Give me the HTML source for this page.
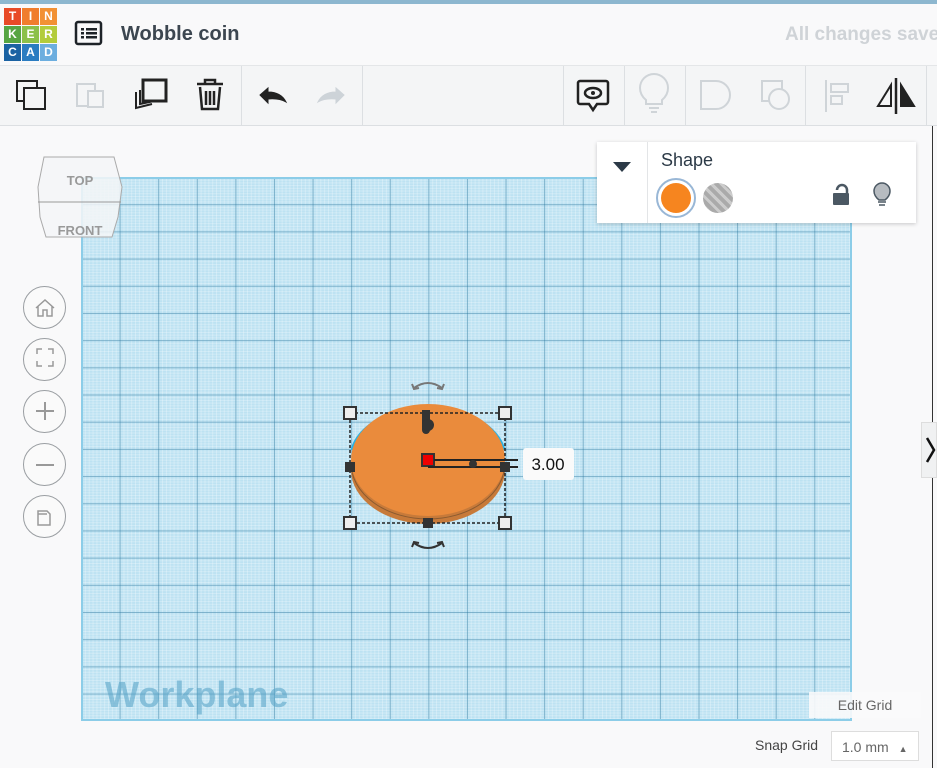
<!DOCTYPE html>
<html><head><meta charset="utf-8"><style>
*{margin:0;padding:0;box-sizing:border-box}
body{width:937px;height:768px;overflow:hidden;background:#f9f9fa;font-family:"Liberation Sans",sans-serif;position:relative}
.abs{position:absolute}
#topbar{left:0;top:0;width:937px;height:4px;background:#8db7cf}
#hdr{left:0;top:4px;width:937px;height:62px;background:#f9f9fa;border-bottom:1px solid #e4e6e8}
#tb{left:0;top:66px;width:937px;height:60px;background:#f4f5f6;border-bottom:1px solid #dcdfe2}
.logo div{position:absolute;width:17px;height:17px;color:#fff;font-weight:bold;font-size:12px;text-align:center;line-height:17px}
#plane{left:81px;top:177px;width:771px;height:544px;background-color:#bde2f2;
background-image:
linear-gradient(to right,rgba(40,120,160,.5) 1px,transparent 1px),
linear-gradient(to bottom,rgba(40,120,160,.5) 1px,transparent 1px),
linear-gradient(to right,rgba(255,255,255,.28) 1px,transparent 1px),
linear-gradient(to bottom,rgba(255,255,255,.28) 1px,transparent 1px);
background-size:38.6px 27.2px,38.6px 27.2px,3.86px 2.72px,3.86px 2.72px;
box-shadow:inset 0 0 0 2px #8ccde8}
.circ{position:absolute;left:23px;width:43px;height:43px;border:1px solid #9a9ea2;border-radius:50%;background:#fafafa}
.sep{position:absolute;top:66px;width:1px;height:60px;background:#dcdfe2}
</style></head><body>
<div class="abs" id="topbar"></div>
<div class="abs" id="hdr"></div>
<div class="abs logo" style="left:4px;top:8px;width:54px;height:54px">
<div style="left:0;top:0;background:#e84a27">T</div><div style="left:18px;top:0;background:#f07d2d">I</div><div style="left:36px;top:0;background:#f29134">N</div>
<div style="left:0;top:18px;background:#57a543">K</div><div style="left:18px;top:18px;background:#8cc04a">E</div><div style="left:36px;top:18px;background:#b3cc3c">R</div>
<div style="left:0;top:36px;background:#1b62a3">C</div><div style="left:18px;top:36px;background:#2a7cc1">A</div><div style="left:36px;top:36px;background:#6caedf">D</div>
</div>
<svg class="abs" style="left:74px;top:20px" width="30" height="26"><rect x="2" y="2" width="25" height="22" rx="2" fill="none" stroke="#1e2328" stroke-width="2.5"/><g fill="#1e2328"><rect x="7" y="8" width="3" height="2.5"/><rect x="12" y="8" width="11" height="2.5"/><rect x="7" y="12" width="3" height="2.5"/><rect x="12" y="12" width="11" height="2.5"/><rect x="7" y="16" width="3" height="2.5"/><rect x="12" y="16" width="11" height="2.5"/></g></svg>
<div class="abs" style="left:121px;top:23px;font-size:20px;font-weight:bold;color:#3c4650">Wobble coin</div>
<div class="abs" style="left:785px;top:24px;font-size:19px;font-weight:bold;color:#cfd3d7;white-space:nowrap">All changes saved</div>
<div class="abs" id="tb"></div>
<div class="sep" style="left:241px"></div><div class="sep" style="left:362px"></div><div class="sep" style="left:563px"></div><div class="sep" style="left:624px"></div><div class="sep" style="left:685px"></div><div class="sep" style="left:805px"></div><div class="sep" style="left:926px"></div>
<svg class="abs" style="left:0;top:66px" width="937" height="60" fill="none" stroke-width="2">
<rect x="17" y="15" width="20" height="20" stroke="#222" fill="#f4f5f6"/><rect x="24" y="22" width="21" height="21" stroke="#222" fill="#f4f5f6"/>
<rect x="77" y="18" width="18" height="22" stroke="#cfd4d8"/><rect x="88" y="25" width="15" height="16" stroke="#cfd4d8" fill="#f4f5f6"/>
<path d="M136 26 l0 16 l16 -4 M140 24 l0 14 l14 -3" stroke="#222"/><rect x="143" y="14" width="23" height="21" stroke="#222" stroke-width="3" fill="#f4f5f6"/>
<path d="M197 18 h26 M205 18 v-4 h10 v4 M200 21 l2 22 h16 l2 -22 M206 25 v14 M210 25 v14 M214 25 v14" stroke="#222" stroke-width="2.5"/>
<path d="M260 29 l8 -7 v4 q13 0 18 10 q-7 -4 -18 -3 v4 z" fill="#222" stroke="#222" stroke-width="1"/>
<path d="M344 29 l-8 -7 v4 q-13 0 -18 10 q7 -4 18 -3 v4 z" fill="#cdd3d8" stroke="#cdd3d8" stroke-width="1"/>
<path d="M580 15 h26 a2 2 0 0 1 2 2 v19 a2 2 0 0 1 -2 2 h-9 l-4 6 l-4 -6 h-9 a2 2 0 0 1 -2 -2 v-19 a2 2 0 0 1 2 -2z" stroke="#222" stroke-width="2.5"/><ellipse cx="593" cy="27" rx="8" ry="5" stroke="#222" stroke-width="2.5"/><circle cx="593" cy="27" r="2" fill="#222"/>
<path d="M646 34 q-6 -5 -6 -12 a14 14 0 0 1 28 0 q0 7 -6 12 v4 h-16z M649 42 h10 M651 46 h6" stroke="#cfd4d8"/>
<path d="M701 15 h15 a11 11 0 1 1 0 28 h-15z" stroke="#cfd4d8"/>
<rect x="762" y="15" width="20" height="20" stroke="#cfd4d8"/><circle cx="779" cy="33" r="10" stroke="#cfd4d8" fill="#f4f5f6"/>
<path d="M826 14 v32" stroke="#cfd4d8"/><rect x="831" y="18" width="17" height="8" stroke="#cfd4d8"/><rect x="831" y="30" width="11" height="8" stroke="#cfd4d8"/>
<path d="M896 12 v36" stroke="#222" stroke-width="2.5"/><path d="M891 19 l-13 21 h13z" stroke="#222"/><path d="M901 19 l13 21 h-13z" fill="#222" stroke="#222"/>
</svg>
<div class="abs" style="left:932px;top:126px;width:1px;height:642px;background:#333"></div>
<div class="abs" id="plane"></div>
<div class="abs" style="left:105px;top:674px;font-size:36px;font-weight:bold;color:rgba(90,165,200,.6)">Workplane</div>
<svg class="abs" style="left:36px;top:155px" width="90" height="100"><path d="M8 2 h70 l8 30 l-4 30 l-6 20 h-66 l-6 -20 l-2 -30z" fill="rgba(245,246,247,.85)" stroke="#aaa"/><path d="M2 47 h83" stroke="#999"/><text x="44" y="30" text-anchor="middle" font-family="Liberation Sans" font-weight="bold" font-size="13" fill="#999">TOP</text><text x="44" y="80" text-anchor="middle" font-family="Liberation Sans" font-weight="bold" font-size="13" fill="#999">FRONT</text></svg>
<div class="circ" style="top:286px"></div><div class="circ" style="top:338px"></div><div class="circ" style="top:390px"></div><div class="circ" style="top:443px"></div><div class="circ" style="top:495px"></div>
<svg class="abs" style="left:23px;top:286px" width="44" height="252" fill="none" stroke="#999" stroke-width="1.5">
<path d="M13 22 l9 -8 l9 8 M15 20 v10 h5 v-6 h4 v6 h5 v-10"/>
<path d="M14 68 v-5 h5 M25 63 h5 v5 M30 75 v5 h-5 M19 80 h-5 v-5"/>
<path d="M22 116 v18 M13 125 h18" stroke-width="2"/>
<path d="M13 179 h18" stroke-width="2"/>
<path d="M15 239 v-14 h9 l3 3 v11 z M15 228 h9"/>
</svg>
<div class="abs" style="left:597px;top:142px;width:319px;height:81px;background:#fff;box-shadow:0 1px 4px rgba(0,0,0,.2)"></div>
<div class="abs" style="left:647px;top:142px;width:1px;height:81px;background:#e3e5e7"></div>
<svg class="abs" style="left:612px;top:161px" width="20" height="12"><path d="M1 1 h18 l-9 10z" fill="#2c3a47"/></svg>
<div class="abs" style="left:661px;top:150px;font-size:18px;color:#2c3a47">Shape</div>
<div class="abs" style="left:656px;top:178px;width:40px;height:40px;border:2px solid #99b7d6;border-radius:50%;background:#fff"></div>
<div class="abs" style="left:661px;top:183px;width:30px;height:30px;border-radius:50%;background:#f6851f"></div>
<div class="abs" style="left:703px;top:183px;width:30px;height:30px;border-radius:50%;background:repeating-linear-gradient(45deg,#aaa 0 4px,#ccc 4px 7px)"></div>
<svg class="abs" style="left:830px;top:180px" width="70" height="30"><path d="M7 10 a5 5 0 0 1 10 0 v4" fill="none" stroke="#4b5863" stroke-width="2.5"/><rect x="3" y="13" width="16" height="12" rx="1" fill="#4b5863"/><path d="M49 20 q-5 -4 -5 -9 a8 8 0 0 1 16 0 q0 5 -5 9z" fill="#b7bcc1" stroke="#4b5863" stroke-width="1.5"/><path d="M48 22 h8 M49 25 h6" stroke="#4b5863" stroke-width="1.5"/></svg>
<svg class="abs" style="left:330px;top:370px" width="260" height="190">
<ellipse cx="98" cy="100" rx="77" ry="54" fill="#c77a3a"/>
<path d="M22 80 a77 50 0 0 1 152 0" fill="none" stroke="#2ab2e3" stroke-width="3"/>
<ellipse cx="98" cy="90" rx="77" ry="56" fill="#ea8b3c"/>
<path d="M21 93 a77 56 0 0 0 154 0" fill="none" stroke="#8a5a30" stroke-width="1"/>
<rect x="20" y="43" width="155" height="110" fill="none" stroke="#222" stroke-dasharray="3 2" stroke-width="1.5"/>
<path d="M92 40 h8 v20 a4 4 0 0 1 -8 0z" fill="#333"/><circle cx="98" cy="55" r="6" fill="#333"/>
<rect x="92" y="84" width="12" height="12" fill="#e00" stroke="#333" stroke-width="2"/>
<path d="M104 90 h84 M98 97 h90" stroke="#222" stroke-width="2"/><circle cx="143" cy="94" r="4" fill="#333"/>
<rect x="15" y="92" width="10" height="10" fill="#333"/><rect x="170" y="92" width="10" height="10" fill="#333"/><rect x="93" y="148" width="10" height="10" fill="#333"/>
<rect x="14" y="37" width="12" height="12" fill="#eee" stroke="#333" stroke-width="2"/><rect x="169" y="37" width="12" height="12" fill="#eee" stroke="#333" stroke-width="2"/>
<rect x="14" y="147" width="12" height="12" fill="#eee" stroke="#333" stroke-width="2"/><rect x="169" y="147" width="12" height="12" fill="#eee" stroke="#333" stroke-width="2"/>
<path d="M84 18 q14 -10 28 0 M82 14 l2 5 5 -1 M114 14 l-2 5 -5 -1" fill="none" stroke="#777" stroke-width="2"/>
<path d="M84 173 q14 10 28 0 M82 177 l2 -5 5 1 M114 177 l-2 -5 -5 1" fill="none" stroke="#333" stroke-width="2"/>
<rect x="193" y="78" width="51" height="32" rx="3" fill="#fafafa"/>
<text x="218" y="100" text-anchor="middle" font-family="Liberation Sans" font-size="17" fill="#111">3.00</text>
</svg>
<div class="abs" style="left:921px;top:422px;width:16px;height:56px;background:#f0f1f2;border:1px solid #ddd"></div>
<svg class="abs" style="left:925px;top:435px" width="12" height="30"><path d="M2 3 l7 12 l-7 12" fill="none" stroke="#111" stroke-width="2.5"/></svg>
<div class="abs" style="left:809px;top:692px;width:112px;height:26px;background:rgba(250,250,251,.9);font-size:14px;color:#666;text-align:center;line-height:26px">Edit Grid</div>
<div class="abs" style="left:755px;top:737px;font-size:14px;color:#444">Snap Grid</div>
<div class="abs" style="left:831px;top:731px;width:88px;height:30px;background:#fff;border:1px solid #ddd;font-size:14px;color:#666;line-height:30px;padding-left:10px">1.0 mm <span style="font-size:9px;margin-left:6px">▲</span></div>
</body></html>
